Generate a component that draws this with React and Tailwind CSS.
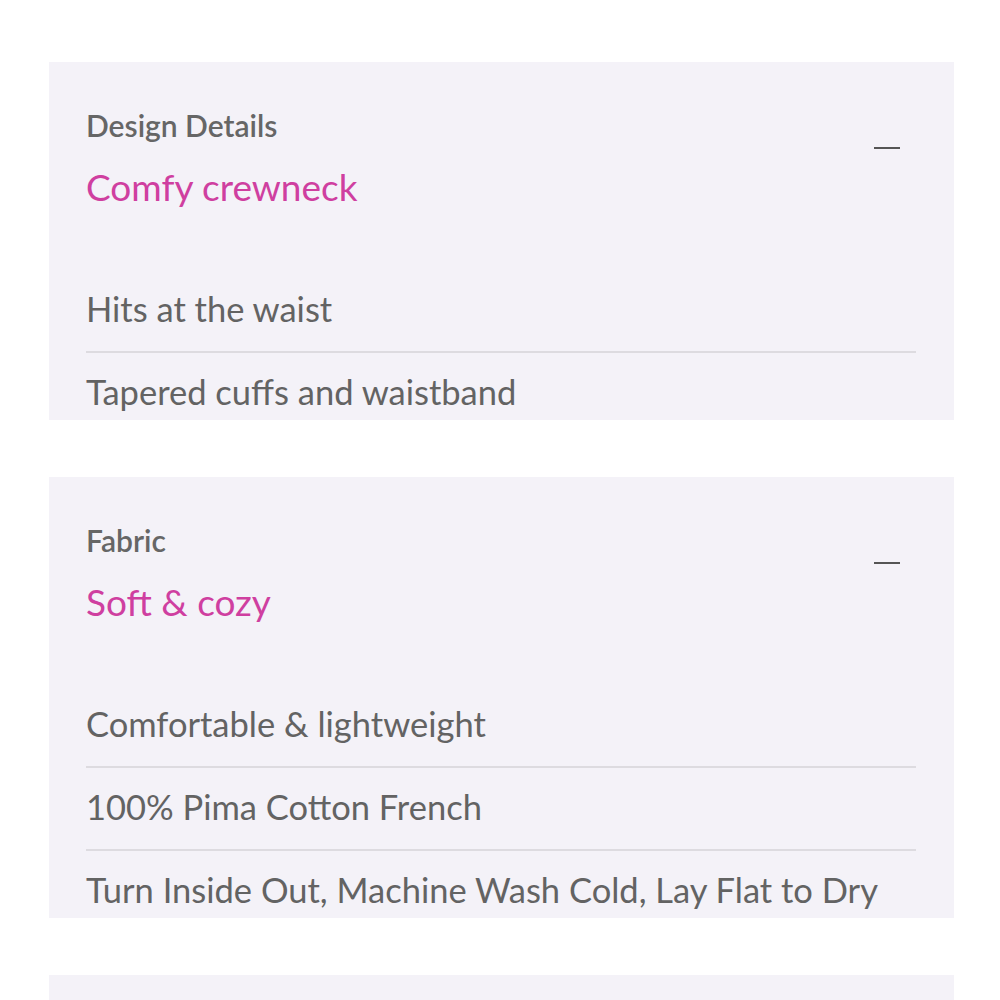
const sections = [
  {
    label: "Design Details",
    title: "Comfy crewneck",
    items: ["Hits at the waist", "Tapered cuffs and waistband"],
  },
  {
    label: "Fabric",
    title: "Soft & cozy",
    items: [
      "Comfortable & lightweight",
      "100% Pima Cotton French",
      "Turn Inside Out, Machine Wash Cold, Lay Flat to Dry",
    ],
  },
];

const Section = ({ section }) => (
  <div className="bg-[#f4f2f8] pl-[37px] pr-[38px] pt-[45px] pb-[6px]">
    <div className="flex items-start justify-between">
      <div>
        <p className="text-[30px] leading-[36px] font-semibold text-[#666666]">
          {section.label}
        </p>
        <p className="mt-[22px] text-[37px] leading-[44px] text-[#cf3fa0]">
          {section.title}
        </p>
      </div>
      <div className="mt-[40px] mr-[16px] w-[26px] h-[2px] bg-[#555555]" />
    </div>
    <ul className="mt-[61px]">
      {section.items.map((item, i) => (
        <li
          key={item}
          className={
            i < section.items.length - 1
              ? "pt-[17px] pb-[20px] border-b-2 border-[#dddbe0] text-[34.5px] leading-[44px] text-[#636363]"
              : "pt-[17px] text-[34.5px] leading-[44px] text-[#636363]"
          }
        >
          {item}
        </li>
      ))}
    </ul>
  </div>
);

export default function App() {
  return (
    <div
      className="w-[1000px] h-[1000px] overflow-hidden bg-white pl-[49px] pr-[46px] pt-[62px] flex flex-col gap-[57px]"
      style={{ fontFamily: "Lato, 'Noto Sans', sans-serif" }}
    >
      {sections.map((s) => (
        <Section key={s.label} section={s} />
      ))}
      <div className="bg-[#f4f2f8] h-[80px] shrink-0" />
    </div>
  );
}
